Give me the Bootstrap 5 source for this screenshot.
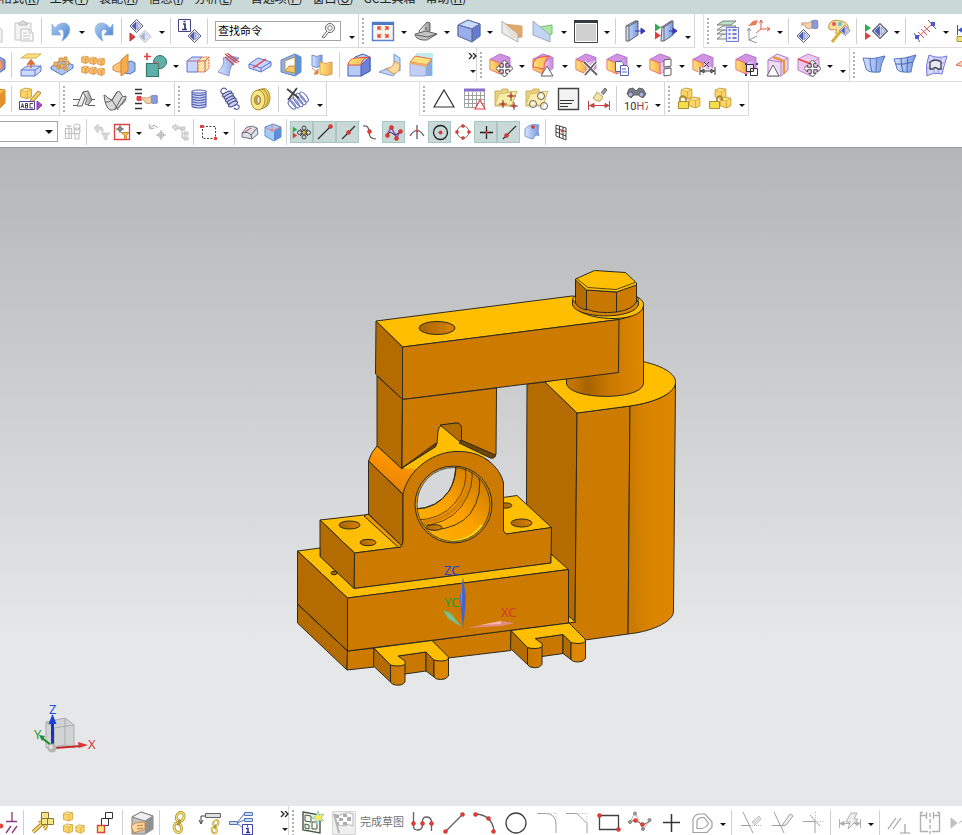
<!DOCTYPE html>
<html lang="zh-CN">
<head>
<meta charset="utf-8">
<meta name="viewport" content="width=device-width, initial-scale=1">
<title>装配</title>
<link href="https://cdn.jsdelivr.net/npm/bootstrap@5.3.0/dist/css/bootstrap.min.css" rel="stylesheet">
<style>
body{font:12px/16px "Noto Sans","Noto Sans CJK SC",sans-serif;color:#222}
.menus{height:14px;background:#c9d9d7;gap:10px;padding-bottom:8px;font-family:"Noto Sans CJK SC",sans-serif}
.menus a{color:#222;line-height:16px}
.bars{height:34px}
.bar{border-right:1px solid #d6d6d6;border-bottom:1px solid #dcdcdc}
.bar.lead-cut{margin-left:-22px}
.bar.page-cut{margin-left:-23px}
.bar.low-cut{margin-left:-10px}
.grip{width:8px;height:26px;flex:none}
.grip::before{content:"";display:block;height:26px;margin-left:3px;border-left:2px dotted #b0b0b0}
.tb,.car,.more,.sm{flex:none;border-radius:0;line-height:0}
.tb{width:31px;height:33px}
.sm{width:23px;height:22px}
.sm.on{background:#c9d9d7;border:1px solid #aac6c2 !important}
.sm.slim{width:20px}
.car{width:12px;height:20px}
.more{width:13px;height:33px;padding-top:10px !important}
.car::before,.more::before{content:"";display:inline-block;border:3px solid transparent;border-top-color:#111;border-bottom:0}
.chev{width:16px;height:33px;flex:none;border-radius:0;line-height:0}
.div{width:6px;height:26px;flex:none}
.div::before{content:"";display:block;height:26px;margin-left:2px;border-left:1px solid #d0d0d0}
.void{width:92px}
.ic{width:24px;height:24px;fill:none;stroke:#555;stroke-width:1;overflow:hidden;flex:none;opacity:.92}
.sm .ic{width:20px;height:20px}
.find{width:126px;height:20px;border:1px solid #a4a4a4;margin-left:4px}
.find input{font-size:11px;min-width:0;outline:0;text-indent:2px}
.combo{width:60px;height:21px;border:1px solid #a4a4a4;margin-left:-2px;margin-right:3px;appearance:none;background:#fff}
.combobox{display:grid}
.combobox>*{grid-area:1/1}
.combobox i{align-self:center;justify-self:end;border:4px solid transparent;border-top-color:#111;border-bottom:0;pointer-events:none}
.rowsel{height:32px;border-bottom:1px solid #9b9c9e}
.stage{background:linear-gradient(#b4b5b7,#e6e7e9 75%)}
.foot{height:29px}
.done{width:79px;height:33px;font-size:11px;color:#aaa;flex:none;border-radius:0}
.done span{white-space:nowrap}
.dis{opacity:.7}
.model{stroke:#2c2a22;stroke-width:1;stroke-linejoin:round}
.axis{font:13px "Noto Sans",sans-serif;stroke:none}
</style>
<script src="https://cdn.jsdelivr.net/npm/bootstrap@5.3.0/dist/js/bootstrap.bundle.min.js" defer></script>
</head>
<body class="vh-100 d-flex flex-column overflow-hidden bg-white">
<svg width="0" height="0" class="position-absolute" aria-hidden="true"><defs>
<linearGradient id="b"><stop stop-color="#d6e4ff"/><stop offset="1" stop-color="#6c8fe0"/></linearGradient>
<linearGradient id="u" x2="1" y2="1"><stop stop-color="#a9cbf2"/><stop offset="1" stop-color="#3173cc"/></linearGradient>
<linearGradient id="g"><stop stop-color="#fff0a0"/><stop offset="1" stop-color="#e5ab22"/></linearGradient>
<linearGradient id="o"><stop stop-color="#ffe46a"/><stop offset="1" stop-color="#f5a545"/></linearGradient>
<linearGradient id="p"><stop stop-color="#f3daf7"/><stop offset="1" stop-color="#bf7ad8"/></linearGradient>
<linearGradient id="y"><stop stop-color="#f7f7f7"/><stop offset="1" stop-color="#8d8d8d"/></linearGradient>
<symbol id="cube" viewBox="0 0 24 24"><path d="M1 7 12 1l11 4-11 6z" fill="#cf8be0" stroke="#a65cc6"/><path d="m12 11 11-6v12l-11 6z" fill="url(#p)" stroke="#b97fd0"/><path d="m1 7 11 4v12L1 18z" fill="url(#o)" stroke="#f0605a"/></symbol>
<symbol id="bcube" viewBox="0 0 24 24"><path d="M1 6 11 1l12 4-8 5z" fill="#c5d5ff"/><path d="m15 10 8-5v12l-8 6z" fill="#5671cc"/><path d="m1 6 14 4v13L1 17z" fill="#8fa9ee"/><path d="M1 6 11 1l12 4v12l-8 6L1 17zm0 0 14 4 8-5m-8 5v13" stroke="#5c77cc" stroke-width=".8"/></symbol>
<symbol id="box" viewBox="0 0 12 12"><path d="m1 3 4-2 6 1v7l-4 2-6-2z" fill="#fbd25a" stroke="#c3901f" stroke-width=".8"/><path d="m1 3 6 1 4-2M7 4v7" stroke="#d2a02c" stroke-width=".8"/><path d="m2 3 3-1 4 .5-2 1z" fill="#fff2b6" stroke="none"/></symbol>
<symbol id="boxo" viewBox="0 0 12 12"><path d="m1 3 4-2 6 1v8l-4 2-6-2z" fill="#fbb95a" stroke="#d07a20"/><path d="m1 3 6 1 4-2M7 4v8" stroke="#d07a20"/><path d="m2 3 3-1 4 .5-2 1z" fill="#ffeaa6" stroke="none"/></symbol>
<symbol id="dia" viewBox="0.5 0.5 15 15"><path d="m8 1 7 7-7 7-7-7z" fill="#f3f5fc" stroke="#445"/><path d="m7.500 3.500-4.500 4.500 4.500 4.500z" fill="#4354b0" stroke="#2e3e94" stroke-width=".6"/><path d="m9 4 4 4-4 4z" fill="#c9d0f2" stroke="#5765b5" stroke-width=".6"/></symbol>
<symbol id="move" viewBox="0 0 14 14"><path d="m7 0 3 3H8v3h3V4l3 3-3 3V8H8v3h2l-3 3-3-3h2V8H3v2L0 7l3-3v2h3V3H4z" fill="#fff" stroke="#333" stroke-width=".8"/></symbol>
<symbol id="tris" viewBox="0 0 8 16"><path d="m1 0 6 4-6 4z" fill="#21a63e" stroke="none"/><path d="m1 8 6 4-6 4z" fill="#d8332f" stroke="none"/></symbol>
<symbol id="dot" viewBox="0 0 6 6"><circle cx="3" cy="3" r="2.400" fill="#ed2b22" stroke="#a71c18" stroke-width=".6"/></symbol>
<symbol id="link" viewBox="0 0 12 20"><ellipse cx="7" cy="5" rx="3" ry="4" transform="rotate(25 7 5)" stroke="#a58a20" stroke-width="2.400"/><ellipse cx="7" cy="5" rx="3" ry="4" transform="rotate(25 7 5)" stroke="#f3dd68" stroke-width="1.200"/><ellipse cx="5" cy="14" rx="3" ry="4" transform="rotate(-15 5 14)" stroke="#a58a20" stroke-width="2.400"/><ellipse cx="5" cy="14" rx="3" ry="4" transform="rotate(-15 5 14)" stroke="#f3dd68" stroke-width="1.200"/><path d="m7 7-2 5" stroke="#a58a20" stroke-width="2"/></symbol>
<symbol id="fold" viewBox="0 0 24 24"><path d="M1 4h6l1-2h6v3h8l-4 14H1z" fill="#e6cf74" stroke="#c2a850"/><path d="m5 7 18-3-5 14H1z" fill="#fbeba2" stroke="#d2b85e"/></symbol>
<symbol id="hand" viewBox="0 0 14 10"><path d="M8.500 1.500q3-1 5 0v6q-2 1-5 0z" fill="#7f93dc" stroke="#5869ad" stroke-width=".6"/><path d="M0 3.500q3-1 5 0l3.500-1.500v5.500q-3 1-4.500 0L2.500 5H0z" fill="#f8cfa4" stroke="#a87c4e" stroke-width=".6"/></symbol>
</defs></svg>

<nav class="menus d-flex align-items-end overflow-hidden text-nowrap flex-shrink-0" aria-label="菜单">
<a class="text-decoration-none" href="#">格式(<u>R</u>)</a><a class="text-decoration-none" href="#">工具(<u>T</u>)</a><a class="text-decoration-none" href="#">装配(<u>A</u>)</a><a class="text-decoration-none" href="#">信息(<u>I</u>)</a><a class="text-decoration-none me-2" href="#">分析(<u>L</u>)</a><a class="text-decoration-none" href="#">首选项(<u>P</u>)</a><a class="text-decoration-none" href="#">窗口(<u>O</u>)</a><a class="text-decoration-none" href="#">GC工具箱</a><a class="text-decoration-none" href="#">帮助(<u>H</u>)</a>
</nav>

<div class="bars d-flex overflow-hidden flex-shrink-0" role="toolbar" aria-label="标准">
<div class="bar page-cut d-flex align-items-center flex-shrink-0">
<button class="btn p-0 border-0 tb" title="复制"><svg class="ic" viewBox="0 0 24 24"><path d="M6 6h9l6 5v12H6z" fill="#f5f5f5" stroke="#bbb"/></svg></button>
<button class="btn p-0 border-0 tb" title="粘贴"><svg class="ic" viewBox="0 0 24 24"><path d="M3 4h16v17H3z" fill="#f2f2f2" stroke="#c4c4c4"/><path d="M7 6V4h2l1-2h2l1 2h2v2z" fill="#ddd" stroke="#b5b5b5"/><path d="M9 10h8l4 4v8H9z" fill="#fafafa" stroke="#bbb"/><path d="M17 10v4h4M11 14h4m-4 3h7m-7 3h7" stroke="#c4c4c4"/></svg></button>
<span class="div"></span>
<button class="btn p-0 border-0 tb" title="撤销"><svg class="ic" viewBox="0 0 24 24"><path d="M3 5v11h9l-3-4c4-4 8 0 4 10C23 16 23 5 15 4c-4 0-7 2-9 5z" fill="url(#u)" stroke="#7da5dc" stroke-width=".7"/></svg></button><button class="btn p-0 border-0 car" title="更多"></button>
<button class="btn p-0 border-0 tb" title="重做"><svg class="ic" viewBox="0 0 24 24"><path d="M21 5v11h-9l3-4c-4-4-8 0-4 10C1 16 1 5 9 4c4 0 7 2 9 5z" fill="url(#u)" stroke="#7da5dc" stroke-width=".7"/></svg></button>
<span class="div"></span>
<button class="btn p-0 border-0 tb" title="重复命令"><svg class="ic" viewBox="0 0 24 24"><use href="#dia" x="0" y="0" width="15" height="14"/><g opacity=".5"><use href="#dia" x="9" y="11" width="14" height="13"/></g><path d="m1 14 5 4-5 4z" fill="#d0352e" stroke="#a22"/></svg></button><button class="btn p-0 border-0 car" title="更多"></button>
<span class="div"></span>
<button class="btn p-0 border-0 tb" title="命令信息"><svg class="ic" viewBox="0 0 24 24"><path d="M.5.5h12v12H.5z" fill="#fff" stroke="#35357e"/><path d="M5 5h2v5M4 10.500h5M5.500 2.500h2" stroke="#222268" stroke-width="1.700"/><use href="#dia" x="9" y="10" width="15" height="14"/></svg></button>
<span class="div"></span>
<div class="find d-flex align-items-center"><input class="border-0 p-0 flex-fill w-100 bg-transparent" id="q" type="text" value="查找命令" aria-label="查找命令"><svg class="ic" viewBox="0 0 24 24"><circle cx="14" cy="9" r="4.500"/><circle cx="14" cy="9" r="2.300" stroke-width=".8"/><path d="m11 12-5 6 2 1 5-6" fill="#fff"/></svg></div>
<button class="btn p-0 border-0 more ms-1" title="选项"></button>
</div>
<div class="bar d-flex align-items-center flex-shrink-0">
<span class="grip"></span>
<button class="btn p-0 border-0 tb" title="适合窗口"><svg class="ic" viewBox="0 0 24 24"><path d="M1.500 3.500h21v18h-21z" fill="#fff5ee" stroke="#4b7ac9" stroke-width="1.400"/><path d="M1 4.500h22" stroke="#3c6fc5" stroke-width="3"/><path d="M7 11V8h3M7 8l3 3m7 0V8h-3m3 0-3 3m-7 4v3h3m-3 0 3-3m7 0v3h-3m3 0-3-3" stroke="#e8432e" stroke-width="1.500"/></svg></button><button class="btn p-0 border-0 car" title="更多"></button>
<button class="btn p-0 border-0 tb" title="定向视图"><svg class="ic" viewBox="0 0 24 24"><path d="m5 12 8-9 3 1v8l-9 4z" fill="url(#y)"/><path d="m1 15 11-3 11 3-10 6H9q-8-1-8-6z" fill="#c0c0c0"/><path d="m2 16 12 2 9-3M12 8v3" stroke-width="1.200"/></svg></button><button class="btn p-0 border-0 car" title="更多"></button>
<button class="btn p-0 border-0 tb" title="着色"><svg class="ic" viewBox="0 0 24 24"><use href="#bcube" width="24" height="24"/></svg></button><button class="btn p-0 border-0 car" title="更多"></button>
<button class="btn p-0 border-0 tb" title="剖切"><svg class="ic" viewBox="0 0 24 24"><path d="m4 5 18 2v11l-10 1z" fill="#e0a15a" stroke="#d8a065"/><path d="m2 2 16 13v8L2 14z" fill="#e8e8e8" fill-opacity=".85" stroke="#aaa"/></svg></button>
<button class="btn p-0 border-0 tb" title="编辑截面"><svg class="ic" viewBox="0 0 24 24"><path d="m9 8 12-2v9l-8 2z" fill="#a6e6a0" stroke="#69b967"/><path d="M2 2 19 16v7L2 16z" fill="#bcd2f1" stroke="#95a4bc"/></svg></button><button class="btn p-0 border-0 car" title="更多"></button>
<button class="btn p-0 border-0 tb" title="背景"><svg class="ic" viewBox="0 0 24 24"><path d="M.5 1.500h23v22H.5z" fill="#cdcdcd" stroke="#333"/><path d="M0 2.500h24" stroke="#222a33" stroke-width="3"/><path d="M1.500 4.500h21v18h-21z" stroke="#fff"/></svg></button><button class="btn p-0 border-0 car" title="更多"></button>
<span class="div"></span>
<button class="btn p-0 border-0 tb" title="显示"><svg class="ic" viewBox="0 0 24 24"><path d="m3 7 9-5h3v14l-9 6H3z" fill="url(#b)"/><path d="M3 7h3v15M6 7l9-5"/><path d="M12 12h9m-3-3 4 3-4 3z" fill="#2525bd" stroke="#2525bd"/></svg></button>
<button class="btn p-0 border-0 tb" title="显示和隐藏"><svg class="ic" viewBox="0 0 24 24"><use href="#tris" x="0" y="4" width="8" height="17"/><path d="m8 8 9-6h2v14l-9 6H7z" fill="url(#b)"/><path d="M7 8h3v14m0-14 9-6"/><path d="M15 12h7m-3-3 4 3-4 3z" fill="#2525bd" stroke="#2525bd"/></svg></button>
<button class="btn p-0 border-0 more" title="选项"></button>
</div>
<div class="bar d-flex align-items-center flex-fill ms-2 border-start">
<span class="grip"></span>
<button class="btn p-0 border-0 tb" title="图层设置"><svg class="ic" viewBox="0 0 24 24"><g fill="#edf0ec" stroke="#707970"><path d="m1 20 6-5h13l-5 5z"/><path d="m1 15 6-4h13l-5 4z"/><path d="m1 11 6-4h13l-5 4z"/><path d="m1 6 6-4h13l-5 4z" fill="#b5dfc5"/></g><path d="M10.500 8.500h12v14h-12z" fill="#eef" stroke="#6670d7"/><path d="M12.500 11h2m2 0h4m-8 4h2m2 0h4m-8 4h2m2 0h4" stroke="#444f99" stroke-width="1.400"/></svg></button>
<button class="btn p-0 border-0 tb" title="坐标系"><svg class="ic" viewBox="0 0 24 24"><path d="M2 9v12l8-4m-8 4 8 3M0 12l2-3 2 3" stroke="#888"/><path d="M14 1v9l-5 4m5-4h8M12.500 4 14 1l1.500 3M20 8l3 2-3 2" stroke="#e94b36"/><path d="m1 7 5-5 5-1-2 5z" fill="#ee7048" stroke="none"/></svg></button><button class="btn p-0 border-0 car" title="更多"></button>
<span class="div"></span>
<button class="btn p-0 border-0 tb" title="选择对象"><svg class="ic" viewBox="0 0 24 24"><use href="#hand" x="5" y="0" width="18" height="12"/><use href="#dia" x="0" y="10" width="15" height="14"/></svg></button>
<button class="btn p-0 border-0 tb" title="编辑对象显示"><svg class="ic" viewBox="0 0 24 24"><path d="M2 10C0 2 8 0 14 2c7 1 9 7 6 12-3-3-7-1-8 2-4 0-4-3-2-5-3-1-5 1-8-1z" fill="#f7db91" stroke="#b98d42"/><circle cx="7" cy="5" r="2" fill="#e44" stroke="none"/><circle cx="13" cy="5" r="2" fill="#39c7d6" stroke="none"/><path d="m5 23 9-11" stroke="#d6aa31" stroke-width="3"/><use href="#dia" x="12" y="6" width="12" height="11"/></svg></button>
<span class="div"></span>
<button class="btn p-0 border-0 tb" title="播放"><svg class="ic" viewBox="0 0 24 24"><use href="#tris" x="0" y="5" width="8" height="16"/><use href="#dia" x="8" y="4" width="16" height="16"/></svg></button><button class="btn p-0 border-0 car" title="更多"></button>
<span class="div"></span>
<button class="btn p-0 border-0 tb" title="测量"><svg class="ic" viewBox="0 0 24 24"><path d="m5 18 14-13m-14 8 6 6m-3-9 6 6m-3-9 6 6" stroke="#d04b4b"/><path d="m1 14 6 9M15 1l8 9"/><path d="M2 16h4v4H2zM18 3h4v4h-4z" fill="#3b4bcb" stroke="none"/></svg></button><button class="btn p-0 border-0 car" title="更多"></button>
<button class="btn p-0 border-0 tb" title="测量距离"><svg class="ic" viewBox="0 0 24 24"><path d="M1.500 6v10M2 11h20M3 11l4-3v6z" fill="#2b3ccb" stroke="#2b3ccb"/><path d="M1 17.500h22v5H1z" fill="#f2df71" stroke="#a18d2f"/></svg></button>
</div>
</div>

<div class="bars d-flex overflow-hidden flex-shrink-0" role="toolbar" aria-label="特征">
<div class="bar lead-cut d-flex align-items-center flex-shrink-0">
<button class="btn p-0 border-0 tb" title="孔"><svg class="ic" viewBox="0 0 24 24"><path d="m4 4 10-2 9 5v9l-9 6-9-5z" fill="url(#b)" stroke="#4560b8"/><ellipse cx="17" cy="12" rx="4" ry="5" fill="#eb9860" stroke="#c66"/></svg></button>
<span class="div"></span>
<button class="btn p-0 border-0 tb" title="拉伸"><svg class="ic" viewBox="0 0 24 24"><path d="M2 5 8 1h14l-5 4z" fill="#ffe27c" stroke="#d2a83b"/><path d="m2 17 6-4h14v5l-6 5H2z" fill="#c9d6fa" stroke="#516ad0"/><path d="M2 17h14l6-4m-6 4v6" stroke="#516ad0"/><path d="M12 15V9m-3 2 3-4 3 4z" fill="#e88132" stroke="#d76320" stroke-width="1.600"/></svg></button>
<button class="btn p-0 border-0 tb" title="阵列几何"><svg class="ic" viewBox="0 0 24 24"><path d="m1 14 10-7 12 5v3l-11 7L1 16z" fill="#aac1ef" stroke="#416cb9"/><g fill="#f2b24c" stroke="#b97328" stroke-width=".7"><path d="M4 9h4v4H4zM9 5h4v4H9zM10 11h4v4h-4zM15 8h4v4h-4zM14 14h3v3h-3zM14 4h3v3h-3zM7 13h3v3H7z"/></g></svg></button>
<button class="btn p-0 border-0 tb" title="阵列特征"><svg class="ic" viewBox="0 0 24 24"><use href="#boxo" x="0" y="2" width="8" height="9"/><use href="#boxo" x="8" y="3" width="8" height="9"/><use href="#boxo" x="16" y="4" width="8" height="9"/><use href="#boxo" x="0" y="12" width="8" height="9"/><use href="#boxo" x="8" y="13" width="8" height="9"/><use href="#boxo" x="16" y="14" width="8" height="9"/></svg></button>
<button class="btn p-0 border-0 tb" title="镜像"><svg class="ic" viewBox="0 0 24 24"><path d="m1 13 7-4 5 2v8H6l-5-2z" fill="#ffc16b" stroke="#d9853d"/><path d="m13 10 6-2 4 2v8l-5 3-5-1z" fill="#93b5ef" stroke="#3b67b6"/><path d="m9 7 7-6v17l-7 5z" fill="#f8a63e" stroke="#cd7a21"/></svg></button>
<button class="btn p-0 border-0 tb" title="合并"><svg class="ic" viewBox="0 0 24 24"><circle cx="17" cy="9" r="6.500" fill="#51aba1" stroke="#276b64"/><path d="M3.500 10.500h12v13h-12z" fill="#51aba1" stroke="#276b64" stroke-width="1.200"/><path d="M4 0v7M1 3.500h7" stroke="#df3030" stroke-width="1.600"/><path d="M11 10v-1h4v6" stroke="#b96666"/></svg></button><button class="btn p-0 border-0 car" title="更多"></button>
<button class="btn p-0 border-0 tb" title="偏置"><svg class="ic" viewBox="0 0 24 24"><path d="m1 8 5-4h10l-4 4v11H1z" fill="#c6d3fa" stroke="#526bd5"/><path d="m12 8 4-4h7v11l-4 4h-7z" fill="#fde59b" stroke="#d44" stroke-dasharray="2 1"/><path d="M1 8h18l4-4m-4 4v11" stroke="#bc5670"/></svg></button>
<button class="btn p-0 border-0 tb" title="修剪片体"><svg class="ic" viewBox="0 0 24 24"><path d="M6 5q3 6-5 14l11 4q0-11 10-18l-8-2z" fill="url(#b)" stroke="#7c90ce"/><path d="m8 1 12 9M10 0l12 9M8 4l9 8" stroke="#dc3333" stroke-width="1.100"/></svg></button>
<button class="btn p-0 border-0 tb" title="修剪体"><svg class="ic" viewBox="0 0 24 24"><path d="m1 11 9-6 13 4v4l-10 6L1 15z" fill="#c4d1fa" stroke="#5069d3"/><path d="m1 11 12 4 10-6M13 15v4" stroke="#5069d3"/><path d="m5 15 13-9" stroke="#e33" stroke-width="1.500"/></svg></button>
<button class="btn p-0 border-0 tb" title="抽壳"><svg class="ic" viewBox="0 0 24 24"><path d="m2 7 14-6 6 3v15l-6 4-14-4z" fill="#89a9df" stroke="#587bbd"/><path d="m6 8 10-4v12L6 18z" fill="#fff" stroke="#b98c36"/><path d="m6 18 4-5h6v7z" fill="#f4c35b" stroke="#b98c36"/><path d="m16 1 6 3v15l-6 4z" fill="#5689cf" stroke="none"/></svg></button>
<button class="btn p-0 border-0 tb" title="加厚"><svg class="ic" viewBox="0 0 24 24"><path d="M2 2q4 3 10 0v11q-6 3-10 0z" fill="url(#b)" stroke="#6484c7"/><path d="M10 9q6 3 12 0v12q-6 3-12 0z" fill="url(#o)" stroke="#d1964a"/><path d="m2 15 6 5m0-4v5H4z" fill="#e17c35" stroke="#e17c35"/></svg></button>
<span class="div"></span>
<button class="btn p-0 border-0 tb" title="边倒圆"><svg class="ic" viewBox="0 0 24 24"><path d="m1 12 7-8 8-3 7 3v14l-9 5H1z" fill="#b4c8f6" stroke="#3350b4"/><path d="M14 12v11l9-5V4z" fill="#6078d1" stroke="#3350b4"/><path d="M1 12Q2 6 8 5l14-1q-7 1-8 8z" fill="url(#o)" stroke="#d94a35"/></svg></button>
<button class="btn p-0 border-0 tb" title="面倒圆"><svg class="ic" viewBox="0 0 24 24"><path d="m1 19 9-4 10 3-5 5zM16 1l6 4v13l-6-4z" fill="#b7d2f6" stroke="#6d94d0"/><path d="M17 8q-2 7-9 8l8 5q6-2 6-9z" fill="#ffd895" stroke="#d9884a"/></svg></button>
<button class="btn p-0 border-0 tb" title="倒斜角"><svg class="ic" viewBox="0 0 24 24"><path d="M7 0h17v23H7z" fill="#bdeaf0" stroke="none"/><path d="M1 10h16v13H1z" fill="#bdccf1" stroke="#8fa4da"/><path d="m17 10 6-4v17h-6z" fill="#82a5de" stroke="none"/><path d="m1 9 5-6 17 3-5 6z" fill="#f6df72" stroke="#e0624b"/><path d="m1 9 17 2v3L1 11z" fill="#efa461" stroke="none"/></svg></button>
<button class="btn p-0 border-0 chev ms-4" title="展开"><svg class="ic" viewBox="0 0 24 24"><path d="m9 0 3 3-3 3m4-6 3 3-3 3" stroke="#111" stroke-width="1.300"/><path d="M10 17h6l-3 3z" fill="#111" stroke="none"/></svg></button>
</div>
<div class="bar d-flex align-items-center flex-shrink-0">
<span class="grip"></span>
<button class="btn p-0 border-0 tb" title="移动面"><svg class="ic" viewBox="0 0 24 24"><use href="#cube" width="22" height="22"/><use href="#move" x="7" y="7" width="17" height="17"/></svg></button><button class="btn p-0 border-0 car" title="更多"></button>
<button class="btn p-0 border-0 tb" title="拉出面"><svg class="ic" viewBox="0 0 24 24"><use href="#cube" width="22" height="22"/><path d="M1 14Q1 4 10 4l8-1q-6 3-6 13z" fill="url(#o)" stroke="#e44"/><path d="m15 13 6 10H9z" fill="#fff"/></svg></button><button class="btn p-0 border-0 car" title="更多"></button>
<button class="btn p-0 border-0 tb" title="删除面"><svg class="ic" viewBox="0 0 24 24"><use href="#cube" width="22" height="22"/><path d="m9 9 13 13M21 9 10 22" stroke="#fff" stroke-width="3.500"/><path d="m9 9 13 13M21 9 10 22" stroke-width="1.800"/></svg></button>
<button class="btn p-0 border-0 tb" title="复制面"><svg class="ic" viewBox="0 0 24 24"><use href="#cube" width="22" height="22"/><path d="M9.500 8.500h6l2 2v8h-8z" fill="#fff" stroke="#45a"/><path d="M14.500 12.500h6l2 2v8h-8zM16 16h4m-4 3h5" fill="#fff" stroke="#45a"/></svg></button><button class="btn p-0 border-0 car" title="更多"></button>
<button class="btn p-0 border-0 tb" title="阵列面"><svg class="ic" viewBox="0 0 24 24"><use href="#cube" width="22" height="22"/><path d="m15 7 7-1v7l-7 1zM15 16l7-1v7l-7 1z" fill="#fff"/></svg></button><button class="btn p-0 border-0 car" title="更多"></button>
<button class="btn p-0 border-0 tb" title="线性尺寸"><svg class="ic" viewBox="0 0 24 24"><use href="#cube" width="22" height="22"/><path d="M8 18h15M8 14v8M23 14v8M9 18l3-2v4zM22 18l-3-2v4z" stroke="#fff" stroke-width="3"/><path d="M8 18h15M8 14v8M23 14v8M9 18l3-2v4zM22 18l-3-2v4zM12 9l5 5m0-5-5 5" stroke="#222"/></svg></button><button class="btn p-0 border-0 car" title="更多"></button>
<button class="btn p-0 border-0 tb" title="组合面"><svg class="ic" viewBox="0 0 24 24"><use href="#cube" width="22" height="22"/><path d="M11.500 11.500h7v7h-7zM15.500 15.500h7v7h-7z" fill="#fff" fill-opacity=".6" stroke="#222"/><path d="M10 10h2v2h-2zM21 10h2v2h-2zM10 21h2v2h-2z" fill="#22a" stroke="none"/></svg></button>
<button class="btn p-0 border-0 tb" title="调整面"><svg class="ic" viewBox="0 0 24 24"><path d="m2 7 9-6 11 4v12l-7 6H2z" fill="#eed9f3" stroke="#aa6fc0"/><path d="m2 7 13 2 7-4m-7 4v14" stroke="#aa6fc0"/><path d="m7 4 11 4v13" stroke="#e98b32" stroke-width="2.400"/><path d="m7 12 6 11H1z" fill="#fff"/></svg></button>
<button class="btn p-0 border-0 tb" title="移动边"><svg class="ic" viewBox="0 0 24 24"><path d="m1 6 10-5 11 4v12l-8 6-13-6z" fill="#edc4ee" stroke="#af79c2"/><path d="m1 6 13 5 8-6" stroke="#af79c2"/><path d="m1 6 13 5" stroke="#e33" stroke-width="1.500"/><use href="#move" x="7" y="7" width="17" height="17"/></svg></button><button class="btn p-0 border-0 car" title="更多"></button>
<button class="btn p-0 border-0 more" title="选项"></button>
</div>
<div class="bar d-flex align-items-center flex-fill">
<span class="grip"></span>
<button class="btn p-0 border-0 tb" title="直纹"><svg class="ic" viewBox="0 0 24 24"><path d="M1 5q10 2 22-2-4 7-5 16-12 1-14-3Q3 11 1 5z" fill="url(#b)" stroke="#4769be"/><path d="M8 5q0 7 2 14M15 5q-1 7-1 14" stroke="#4769be"/></svg></button>
<button class="btn p-0 border-0 tb" title="曲线网格"><svg class="ic" viewBox="0 0 24 24"><path d="M1 6q10 0 22-4-4 7-5 17-12 1-14-3Q3 11 1 6z" fill="url(#b)" stroke="#4769be"/><path d="M8 5q0 7 2 14M15 4q-1 7-1 15M2 11q9 1 18-2" stroke="#3758b0"/></svg></button>
<button class="btn p-0 border-0 tb" title="N边曲面"><svg class="ic" viewBox="0 0 24 24"><path d="M5 2q9 4 18 1-3 10-5 18-9-2-15 2Q1 12 5 2z" fill="#d3d6ff" stroke="#6a68d4"/><path d="M3 9q9 2 17 1M3 15q8-1 16 1M10 4v17M17 4l-3 16" stroke="#9b99ee"/><path d="M6 16V9q6-4 11 0v7h-3q-3-3-5 0z" fill="#e6e6f8" stroke="#333" stroke-width="1.300"/></svg></button>
<button class="btn p-0 border-0 tb" title="扫掠"><svg class="ic" viewBox="0 0 24 24"><path d="m1 12 8-5h12v9z" fill="#f9d3c3" stroke="#d66242"/></svg></button>
</div>
</div>

<div class="bars d-flex overflow-hidden flex-shrink-0" role="toolbar" aria-label="装配">
<div class="bar lead-cut d-flex align-items-center flex-shrink-0">
<button class="btn p-0 border-0 tb" title="块"><svg class="ic" viewBox="0 0 24 24"><path d="m8 5 9-3 6 1v13l-6 6H8z" fill="#fbb13a" stroke="#c97c1b"/><path d="m18 7 5-4v13l-5 5z" fill="#e08a1a" stroke="none"/></svg></button>
<span class="div"></span>
<button class="btn p-0 border-0 tb" title="名称"><svg class="ic" viewBox="0 0 24 24"><use href="#box" x="0" y="0" width="14" height="13"/><path d="m12 12 7-8 3 2-7 8-4 1z" fill="#f2cd55" stroke="#a87928"/><path d="M.5 14.500h15v8H.5z" fill="#fff" stroke="#44348e"/><path d="m2 21 1.500-4.500L5 21m-2.500-1.500h2M6.500 16.500h2v4.500h-2zm0 2h2M14 16.500h-3V21h3" stroke="#222" stroke-width=".9"/><path d="m18 14 5 4-5 5z" fill="#a43dbe" stroke="#7f2d9c"/></svg></button>
<button class="btn p-0 border-0 more" title="选项"></button>
</div>
<div class="bar d-flex align-items-center flex-shrink-0">
<span class="grip"></span>
<button class="btn p-0 border-0 tb" title="齿轮齿条"><svg class="ic" viewBox="0 0 24 24"><path d="M1 12.500h7M16 12.500h7M1 18.500h5M16 18.500h7"/><path d="m5 19 6-14h4l-5 14z" fill="#eee"/><path d="m11 5 5-1 4 9-4 5-3-1 2-5z" fill="url(#y)"/></svg></button>
<button class="btn p-0 border-0 tb" title="锥齿轮"><svg class="ic" viewBox="0 0 24 24"><path d="M1 8q3 1 4 3l4 2 5-8q2-1 3 0l3 5 3-1q0 6-5 9-6 6-11 5-5-3-6-15z" fill="#d5d5d5"/><path d="m9 13 5 8m0-16-5 8q-3 3-7 2m10 7 7-12m-5 13 8-11" /></svg></button>
<button class="btn p-0 border-0 tb" title="选择列表"><svg class="ic" viewBox="0 0 24 24"><path d="M1 2.500h7m-7 4h7m-7 10h7m-7 5h7" stroke="#222" stroke-width="1.600"/><path d="M3 9.500h4v4H3z" fill="#d33" stroke="#d33"/><use href="#hand" x="7" y="7" width="17" height="12"/></svg></button>
<button class="btn p-0 border-0 more" title="选项"></button>
</div>
<div class="bar d-flex align-items-center flex-shrink-0">
<span class="grip"></span>
<button class="btn p-0 border-0 tb" title="圆柱压缩弹簧"><svg class="ic" viewBox="0 0 24 24"><g stroke="#4a55a8" stroke-width="1.100"><path d="M5 4h14v17H5z" fill="#ccd5ff" stroke="none"/><ellipse cx="12" cy="4.500" rx="7" ry="1.500" fill="#eef"/><path d="M5 7q7 3 14 0M5 9.500q7 3 14 0M5 12q7 3 14 0M5 14.500q7 3 14 0M5 17q7 3 14 0M5 19.500q7 3 14 0M5 4.500v15m14-15v15"/></g></svg></button>
<button class="btn p-0 border-0 tb" title="圆柱拉伸弹簧"><svg class="ic" viewBox="0 0 24 24"><g stroke="#3c4384" stroke-width="1.100" fill="#c7cff4"><path d="M7 7Q2 7 3 3q3-4 6 0M17 18q5-1 4 3-2 3-5 0" fill="none"/><ellipse cx="9" cy="7" rx="5" ry="2" transform="rotate(-28 9 7)"/><ellipse cx="10.500" cy="9.500" rx="5" ry="2" transform="rotate(-28 10 9)"/><ellipse cx="12" cy="12" rx="5" ry="2" transform="rotate(-28 12 12)"/><ellipse cx="13.500" cy="14.500" rx="5" ry="2" transform="rotate(-28 13 14)"/><ellipse cx="15" cy="17" rx="5" ry="2" transform="rotate(-28 15 17)"/></g></svg></button>
<button class="btn p-0 border-0 tb" title="碟簧"><svg class="ic" viewBox="0 0 24 24"><g fill="#f0cf4b" stroke="#a08528"><ellipse cx="15" cy="11" rx="6" ry="9.500"/><ellipse cx="12" cy="12" rx="7" ry="10"/><ellipse cx="9" cy="13" rx="7" ry="10" fill="#f7e27a"/><ellipse cx="8.500" cy="13" rx="3" ry="4.500" fill="#bc9a47"/><ellipse cx="9.500" cy="13" rx="1.500" ry="3" fill="#fff"/></g></svg></button>
<span class="div"></span>
<button class="btn p-0 border-0 tb" title="删除弹簧"><svg class="ic" viewBox="0 0 24 24"><g stroke="#6470bb" stroke-width="1.200"><ellipse cx="6" cy="18" rx="2.500" ry="5" transform="rotate(-40 6 18)"/><ellipse cx="9" cy="16" rx="2.500" ry="6" transform="rotate(-40 9 16)"/><ellipse cx="12" cy="14" rx="2.500" ry="7" transform="rotate(-40 12 14)"/><ellipse cx="15" cy="12" rx="2.500" ry="7" transform="rotate(-40 15 12)"/><ellipse cx="18" cy="10" rx="2.500" ry="6" transform="rotate(-40 18 10)"/></g><path d="m1 2 12 9M11 1 2 13" stroke="#333" stroke-width="1.800"/></svg></button>
<button class="btn p-0 border-0 more" title="选项"></button>
</div>
<div class="void flex-shrink-0"></div>
<div class="bar border-start d-flex align-items-center flex-shrink-0">
<span class="grip"></span>
<button class="btn p-0 border-0 tb" title="三角形"><svg class="ic" viewBox="0 0 24 24"><path d="m12 3 10 17H2z" stroke="#222" stroke-width="1.200"/></svg></button>
<button class="btn p-0 border-0 tb" title="表格"><svg class="ic" viewBox="0 0 24 24"><path d="M1.500 2.500h20v18h-20zM1 8.500h20M1 12.500h20M1 16.500h20M5.500 5v15M9.500 5v15M13.500 5v15M17.500 5v15" stroke="#999"/><path d="M1 3h21" stroke="#7d63c7" stroke-width="3"/><path d="m17 13 5 9H12z" fill="#fff" stroke="#d33" stroke-width="1.200"/></svg></button>
<button class="btn p-0 border-0 tb" title="点集"><svg class="ic" viewBox="0 0 24 24"><use href="#fold" width="24" height="24"/><path d="M17 5v9m-4-5h9M9 13v8m-4-4h8m7-2v8m-4-4h8" stroke="#444"/><use href="#dot" x="15" y="7" width="4" height="4"/><use href="#dot" x="7" y="15" width="4" height="4"/><use href="#dot" x="18" y="17" width="4" height="4"/></svg></button>
<button class="btn p-0 border-0 tb" title="圆集"><svg class="ic" viewBox="0 0 24 24"><use href="#fold" width="24" height="24"/><g fill="#fff8" stroke="#555"><circle cx="16" cy="9" r="3.500"/><circle cx="8" cy="17" r="3.500"/><circle cx="19" cy="19" r="3.500"/></g></svg></button>
<button class="btn p-0 border-0 tb" title="技术要求"><svg class="ic" viewBox="0 0 24 24"><path d="M2.500 1.500h20v21h-20z" fill="#f2f2f2" stroke="#333" stroke-width="1.400"/><path d="M4 13.500h14m-14 3h12m-12 3h8" stroke="#222"/></svg></button>
<button class="btn p-0 border-0 tb" title="清理尺寸"><svg class="ic" viewBox="0 0 24 24"><path d="m14 6 4-5 2 2-4 5" fill="#999"/><path d="m10 5 6 5-3 4q-4 1-7-3 2-2 4-6z" fill="#f3e29c" stroke="#b79b4b"/><path d="M2 18.500h20M1.500 14v9m21-9v9M3 18.500l4-2v4zm19 0-4-2v4z" fill="#b33" stroke="#b33"/></svg></button>
<span class="div"></span>
<button class="btn p-0 border-0 tb" title="公差查询"><svg class="ic" viewBox="0 0 24 24"><path d="m5 2 4-1 3 3 3-3 4 1 3 5-3 4-4-3h-5l-3 3-4-4z" fill="#6c7180"/><circle cx="6.500" cy="7.500" r="2.500" fill="#9ca9df"/><circle cx="17.500" cy="7.500" r="2.500" fill="#9ca9df"/><text x="0" y="23" font-family="Roboto, sans-serif" font-size="11" fill="#222" stroke="none">10<tspan fill="#a22b35">H7</tspan></text></svg></button>
<button class="btn p-0 border-0 more" title="选项"></button>
</div>
<div class="bar d-flex align-items-center flex-shrink-0">
<span class="grip"></span>
<button class="btn p-0 border-0 tb" title="锁定组件"><svg class="ic" viewBox="0 0 24 24"><use href="#box" x="3" y="0" width="13" height="13"/><use href="#box" x="11" y="9" width="13" height="13"/><path d="M3 14v-3q3-4 6 0v3" stroke="#997719" stroke-width="1.600"/><path d="M1.500 14.500h10v7h-10z" fill="#f5d83f" stroke="#a5861c"/></svg></button>
<button class="btn p-0 border-0 tb" title="解锁组件"><svg class="ic" viewBox="0 0 24 24"><use href="#box" x="6" y="0" width="13" height="13"/><use href="#box" x="11" y="9" width="13" height="13"/><path d="M9 14v-3q3-4 5 0v3" stroke="#997719" stroke-width="1.600"/><path d="M1.500 14.500h10v7h-10z" fill="#f5d83f" stroke="#a5861c"/></svg></button>
<button class="btn p-0 border-0 more" title="选项"></button>
</div>
</div>

<div class="rowsel d-flex align-items-center overflow-hidden flex-shrink-0" role="toolbar" aria-label="选择">
<div class="combobox flex-shrink-0"><select class="combo" aria-label="选择范围"><option></option></select><i class="me-2"></i></div>
<button class="btn p-0 border-0 sm" title="装配选择"><svg class="ic dis" viewBox="0 0 20 20"><g stroke="#aaa" stroke-width="1.200"><path d="M2.500 6.500h6v10h-6zM2 11.500h14M6 3v14M3 4h6M12 11v6h4v-5"/><circle cx="14" cy="5" r="3"/><circle cx="14" cy="9" r="3"/></g></svg></button>
<span class="div"></span>
<button class="btn p-0 border-0 sm" title="重置"><svg class="ic dis" viewBox="0 0 20 20"><path d="m2 6 4-4v3q6-1 5 5-1-3-5-2v3zM9 11h9l-3 3v4l-3-1v-3z" fill="#c5c5c5" stroke="#bbb"/></svg></button>
<button class="btn p-0 border-0 sm slim" title="过滤器"><svg class="ic" viewBox="0 0 20 20"><path d="M1.500 2.500h15v15h-15z" fill="#fff" stroke="#d33" stroke-width="1.300"/><circle cx="7" cy="7" r="2"/><path d="M7 3v8M3 7h8"/><path d="M8 10.500h8l-2.500 3v3h-2v-3z" fill="#f1b43a" stroke="#c98325"/></svg></button><button class="btn p-0 border-0 car" title="更多"></button>
<button class="btn p-0 border-0 sm" title="上一选择"><svg class="ic dis" viewBox="0 0 20 20"><g stroke="#888"><path d="m2 2 1 5 4-1M3 6q4-5 8 0M14 8v10m-5-5h10"/><circle cx="14" cy="13" r="2.500"/></g></svg></button>
<button class="btn p-0 border-0 sm" title="选择树"><svg class="ic dis" viewBox="0 0 20 20"><path d="m2 5 4-3v2q4 0 6 4-3-2-6-1v2zM11 5h4v3h-4zM14 10h4v3h-4zM14 15h4v3h-4zM12 8v8h2" fill="#ccc" stroke="#aaa"/></svg></button>
<span class="div"></span>
<button class="btn p-0 border-0 sm" title="矩形选择"><svg class="ic" viewBox="0 0 20 20"><path d="M3.500 4.500h13v12h-13z" stroke="#333" stroke-dasharray="2 1.500"/><path d="M1 3h4v3H1zM15 15h3v3h-3z" fill="#d33" stroke="none"/></svg></button><button class="btn p-0 border-0 car" title="更多"></button>
<span class="div"></span>
<button class="btn p-0 border-0 sm" title="边"><svg class="ic" viewBox="0 0 20 20"><path d="m2 11 5-6q6-2 10 1l1 6-6 5-10-2z" fill="#dadde6" stroke="#667"/><path d="M2 11q6-2 9 2l1 4m-1-4 6-7"/><path d="m5 10 6-4" stroke="#d33"/></svg></button>
<button class="btn p-0 border-0 sm" title="实体"><svg class="ic" viewBox="0 0 20 20"><path d="m2 5 8-3 8 3v10l-7 4-9-5z" fill="#9ec8f6" stroke="#5584c9"/><path d="m11 9 7-4v10l-7 4z" fill="#5285d5" stroke="none"/><path d="M9 2v7L2 5m7 4 9-4" stroke="#e66"/></svg></button>
<span class="div"></span>
<button class="btn p-0 sm on" title="捕捉点"><svg class="ic" viewBox="0 0 20 20"><use href="#tris" x="0" y="4" width="6" height="13"/><g stroke="#333"><circle cx="12" cy="6" r="2"/><circle cx="12" cy="15" r="2"/><circle cx="7.500" cy="10.500" r="2"/><circle cx="16.500" cy="10.500" r="2"/><circle cx="12" cy="10.500" r="2" fill="#fc2"/><path d="m8 7 2 2m4 3 2 2m0-7-2 2m-4 3-2 2"/></g></svg></button>
<button class="btn p-0 sm on" title="端点"><svg class="ic" viewBox="0 0 20 20"><path d="m3 17 12-12" stroke="#222" stroke-width="1.200"/><use href="#dot" x="13" y="2" width="5" height="5"/></svg></button>
<button class="btn p-0 sm on" title="中点"><svg class="ic" viewBox="0 0 20 20"><path d="m4 17 13-13" stroke="#222" stroke-width="1.200"/><use href="#dot" x="8" y="8" width="5" height="5"/></svg></button>
<button class="btn p-0 border-0 sm" title="控制点"><svg class="ic" viewBox="0 0 20 20"><path d="M2 4q6-1 6 6t7 7" stroke-width="1.200"/><use href="#dot" x="6" y="7" width="5" height="5"/></svg></button>
<button class="btn p-0 sm on" title="极点"><svg class="ic" viewBox="0 0 20 20"><path d="m3 13 4-8 6 11 3-8" stroke="#94c" stroke-width="1.600"/><path d="m3 13 3-3 5 3 6-3" stroke="#222"/><use href="#dot" x="1" y="11" width="5" height="5"/><use href="#dot" x="5" y="3" width="5" height="5"/><use href="#dot" x="10" y="14" width="5" height="5"/><use href="#dot" x="14" y="7" width="5" height="5"/></svg></button>
<button class="btn p-0 border-0 sm" title="交点"><svg class="ic" viewBox="0 0 20 20"><path d="M3 14q7-11 14 0M10 3v14" stroke="#444" stroke-width="1.200"/><circle cx="10" cy="9" r="1" fill="#d33" stroke="#d33"/></svg></button>
<button class="btn p-0 sm on" title="圆心"><svg class="ic" viewBox="0 0 20 20"><circle cx="10.500" cy="10.500" r="7" stroke="#111" stroke-width="1.300"/><circle cx="10.500" cy="10.500" r="1.500" fill="#d22" stroke="#d22"/></svg></button>
<button class="btn p-0 border-0 sm" title="象限点"><svg class="ic" viewBox="0 0 20 20"><circle cx="10" cy="10" r="6" stroke="#666"/><use href="#dot" x="8" y="2" width="4" height="4"/><use href="#dot" x="8" y="14" width="4" height="4"/><use href="#dot" x="2" y="8" width="4" height="4"/><use href="#dot" x="14" y="8" width="4" height="4"/></svg></button>
<button class="btn p-0 sm on" title="现有点"><svg class="ic" viewBox="0 0 20 20"><path d="M10.500 4v13M4 10.500h13" stroke="#111" stroke-width="1.300"/><circle cx="10.500" cy="10.500" r="1" fill="#d22" stroke="#d22"/></svg></button>
<button class="btn p-0 sm on" title="曲线上的点"><svg class="ic" viewBox="0 0 20 20"><path d="m4 17 13-13" stroke="#222" stroke-width="1.200"/><use href="#dot" x="5" y="11" width="5" height="5"/></svg></button>
<button class="btn p-0 border-0 sm" title="面上的点"><svg class="ic" viewBox="0 0 20 20"><path d="M3 7q5-6 14-4-2 6 0 11-3-3-6 3-5-1-8-3z" fill="url(#b)" stroke="#7391cc"/><use href="#dot" x="9" y="3" width="4" height="4"/></svg></button>
<span class="div"></span>
<button class="btn p-0 border-0 sm" title="网格点"><svg class="ic" viewBox="0 0 20 20"><path d="m5 3 10 3v12L5 14zM8.500 4v12M12 5v12M5 6.500l10 3M5 10l10 4" stroke="#333"/><circle cx="11" cy="9" r="1" fill="#d33" stroke="#d33"/></svg></button>
</div>

<main class="stage flex-fill overflow-hidden" style="min-height:0">
<svg class="d-block w-100 h-100" viewBox="0 148 962 658" role="img" aria-label="装配模型">
<defs>
<linearGradient id="cyl"><stop stop-color="#c97800"/><stop offset=".45" stop-color="#d98300"/><stop offset="1" stop-color="#de8700"/></linearGradient>
<linearGradient id="boss"><stop stop-color="#ca7900"/><stop offset=".28" stop-color="#a86400"/><stop offset=".55" stop-color="#c87700"/><stop offset="1" stop-color="#e08900"/></linearGradient>
<linearGradient id="hole"><stop stop-color="#a86400"/><stop offset="1" stop-color="#d98200"/></linearGradient>
<linearGradient id="bore" x1="0" y1="1" x2="1" y2="0"><stop stop-color="#ffb900"/><stop offset=".5" stop-color="#fba000"/><stop offset="1" stop-color="#b86c00"/></linearGradient>
<linearGradient id="dome" x1="0" y1="1" x2="1" y2="0"><stop stop-color="#d87e00"/><stop offset=".35" stop-color="#fa8f00"/><stop offset=".7" stop-color="#ffb900"/></linearGradient>
<clipPath id="eye"><ellipse cx="453.500" cy="504.500" rx="37" ry="37.500"/></clipPath>
<g id="tab">
<path d="m374 648 16.500 17v17L373.500 666z" fill="#b46c00"/>
<path d="m398 656 28-4v19l-21 3z" fill="#c87800"/><path d="m426 652 8 8v17l-8-6z" fill="#b46c00"/>
<path d="M390.500 665q8 2 14.500-3v20q-3 4-9 3-4 0-5.500-3zM434 660q8 2 14.500-2v18q-3 4-8 3.500-5 0-6.500-2.500z" fill="url(#cyl)"/>
<path d="m374 648 58-7.500 16 16q2 4-6 4.500-6 0-8-1l-8-8-28 4 7 5q2 5-7 5-5 0-7.500-1z" fill="#ffbf00"/>
</g>
</defs>
<g class="model">
<path d="M527 384 545 382 577 413 575 622 526 600z" fill="#b46c00"/>
<path d="M577 413 630 406 628 634 585 640 568 622 575 622z" fill="#cc7a00"/>
<path d="M630 406C658 402 676 392 675.500 382L673.500 611C674 620 656 631 628 634z" fill="url(#cyl)"/>
<path d="M545 382 640 361C662 365 676 374 675.500 382 676 392 658 402 630 406L577 413z" fill="#ffbf00"/>
<path d="M566.500 376v8c4 16 73 17 77 0V305l-25 14z" fill="url(#boss)"/>
<path d="m376 321 196-25 66 9q4 10-19 14.500L402.500 347z" fill="#ffbf00"/>
<path d="m376 321 26.500 26v52.500L375.500 374z" fill="#b46c00"/>
<path d="m402.500 347 216.500-27.500-.5 53-216 27z" fill="#cc7a00"/>
<ellipse cx="437" cy="328" rx="18" ry="6.500" fill="url(#hole)"/>
<path d="M572.500 300v4c8 18 68 20 71 2 1-5-4-8-8-10z" fill="#ffbf00"/>
<path d="M572.500 300v5c5 14 60 15 66 0v-4z" fill="#d68200"/>
<path d="M572.500 299c5 14 60 15 66 0l-4-5h-58z" fill="#ffbf00"/>
<path d="m575.500 279 11 11v20q-9-2-11-7z" fill="#b46c00"/><path d="m586.500 290 30 2v20q-19 2-30-3z" fill="#c87800"/><path d="m616.500 292 20-9v19q-5 8-20 10z" fill="#cc7a00"/>
<path d="m575.500 279 19-8.500 31 2 11 10.500v2l-20 7-30-2-11-10z" fill="#ffbf00"/><path d="m577 279 11 8.500 28 2 19-7" fill="none" stroke-width=".8"/>

<path d="M377 376 402.500 399.500 401.500 468.500 377 446z" fill="#b46c00"/>
<path d="M320 520 368 514.500 403 547 354.500 553z" fill="#ffbf00"/>
<path d="m503 497.500 14-2 34.500 32-46 7-3-4z" fill="#ffbf00"/>
<path d="M503.500 503c11-1 11 6 0 5z" fill="#b66d00"/>
<path d="M368.500 461q2-8 8.500-15l25 23 60-28 28 21-41 8-46 24z" fill="url(#dome)"/>
<path d="m368.500 461 34.500 33.500V547l-34.500-33z" fill="#b46c00"/>
<path d="m368 514 35 33-4 1-35-32z" fill="#ed9700"/>
<path d="m401.500 468.500 34.500-24 1-15 4-4 21 17 24 12-2 8-28-8-36 14z" fill="#ffbf00" stroke="none"/>
<path d="m402.500 399.500 94-11.500-.5 66q-1 5-5 3L461.500 441v-13q-1-5-5-5l-14 2q-4 1-4.500 6l-1 13-35 24z" fill="#cc7a00"/>
<path d="m440 425 16-2q5 0 5.500 5v15z" fill="#b46c00"/>
<path d="m402 468 34-25v3.500zM461 440l34.500 15q-1 4-5 3L459 443z" fill="#6f4500"/>
<path d="M403 494C409 467 436 451 458 451.500 483 451 500 467 503.500 483V531l2.500 3 45.500-6.500-.5 35.500L354 588.500 354.500 553 401 547l2-5z" fill="#cc7a00"/>
<path d="m320 520 34.500 33-.5 35.500-34-32z" fill="#b46c00"/>
<ellipse cx="453.500" cy="504.500" rx="38.500" ry="38.500" fill="#e09000"/>
<g clip-path="url(#eye)">
<path d="M414 465h80v80h-80z" fill="url(#bore)"/>
<path d="M410 460h46q0 20-7 31-12 18-34 18z" fill="#d6d7d9"/>
<path d="M468 466q5 20-10 39-14 17-42 18" fill="none" stroke="#d98400" stroke-width="4"/>
<path d="M465 466q4 20-10 37-14 17-40 17m56-54q5 20-10 41-14 18-44 19" fill="none" stroke="#5b3800" stroke-width=".9"/>
<path d="M456 466q0 14-7 25-12 17-34 18M478 472q6 22-8 42-12 14-36 16" fill="none" stroke-width=".9"/>
<path d="M422 530q17 16 38 10 14-3 22-15" fill="none" stroke="#f8d418" stroke-width="2.500"/>
</g>
<ellipse cx="453.500" cy="504.500" rx="36.500" ry="37" fill="none" stroke-width=".8"/>
<g fill="url(#hole)"><ellipse cx="434" cy="527.500" rx="8" ry="2.800"/><ellipse cx="349.500" cy="525" rx="10.500" ry="4"/><ellipse cx="368" cy="542.500" rx="8" ry="3.200"/><ellipse cx="521.500" cy="523" rx="10.500" ry="4"/></g>
<path d="m297.500 551 22.500-3v8.500l34 32L551 563v-9l17.500 15.500L347.500 598z" fill="#ffbf00"/>
<ellipse cx="334" cy="573" rx="3" ry="1.800" fill="#a86500"/>
<path d="m297.500 551 50 47v53l-50-47zM297.500 604l50 47-.5 19-49.500-47z" fill="#b46c00"/>
<path d="m347.500 651 26.500-3v19l-27 3zM432 640.500l79-10.500v20.500L448 658z" fill="#cc7a00"/>
<path d="m347.500 598 221-28.500V623l-221 28z" fill="#cc7a00"/>
<path d="m568.500 616 7 6-7 1z" fill="#ffbf00"/>
<use href="#tab"/><use href="#tab" x="137" y="-17.500"/>
</g>
<g stroke="none"><path d="m463 577 3 20-1 14-2 17-2-17-1-14z" fill="#4763d0"/><path d="m462 580-1 16 1 14z" fill="#8c9bd9"/><path d="m443 610 8 3 11 14-14-8z" fill="#78b983"/><path d="m444 611 7 6 9 9z" fill="#bce2bd"/><path d="m467 628 34-7 14 2-14 3z" fill="#e48a81"/><path d="m480 625 21-4v3z" fill="#f4b8ae"/></g>
<g class="axis"><text x="444" y="575" fill="#2442d8">ZC</text><text x="444" y="607" fill="#2b9a35">YC</text><text x="501" y="617" fill="#d33a32">XC</text></g>
<g fill="#d2d3d5" stroke="#aaacae"><path d="m46 722 19-4 9 7v23l-8-3-20 3z"/><path d="m46 722 8 6 20-3m-20 3v22M65 718v27" fill="none"/></g>
<path d="M52.500 746v-26" stroke="#1238b8" stroke-width="3"/><path d="m52.500 714 4 10h-8z" fill="#1742d2"/><path d="m51 745-9-7" stroke="#238b2c" stroke-width="2"/><path d="m39 735 6 1-3 5z" fill="#238b2c"/><path d="m55 748 26-2" stroke="#c52828" stroke-width="2"/><path d="m78 742 10 3-9 3z" fill="#d33"/><circle cx="52" cy="748" r="4.500" fill="#b6b6b6"/><circle cx="51" cy="747" r="2" fill="#e4e4e4"/>
<g class="axis"><text x="49" y="714" fill="#2350d8">Z</text><text x="34" y="739" fill="#2b9a35">Y</text><text x="88" y="749" fill="#d33a32">X</text></g>
</svg>
</main>

<div class="foot overflow-hidden flex-shrink-0 bg-white">
<div class="bars d-flex" role="toolbar" aria-label="草图">
<div class="bar low-cut d-flex align-items-center flex-shrink-0">
<button class="btn p-0 border-0 tb" title="约束"><svg class="ic" viewBox="0 0 24 24"><path d="M18 1v9M12 10.500h11M12 22l5-7m1 7 5-7" stroke="#80286e" stroke-width="1.300"/><circle cx="7" cy="15" r="2" fill="#d33" stroke="#d33"/></svg></button>
<span class="div"></span>
<button class="btn p-0 border-0 tb" title="装配约束"><svg class="ic" viewBox="0 0 24 24"><path d="m2 21 9-8m-3-1q4-2 6 1t-1 5" stroke="#a88321" stroke-width="4"/><path d="m2 21 9-8m-3-1q4-2 6 1t-1 5" stroke="#f2d461" stroke-width="2"/><path d="M10.500 1.500h7v6h-7zM16.500 7.500h6v6h-6zM10.500 7.500h6v6h-6z" fill="#f5e37a" stroke="#7a6b28"/></svg></button>
<button class="btn p-0 border-0 tb" title="组件阵列"><svg class="ic" viewBox="0 0 24 24"><use href="#box" x="0" y="0" width="12" height="11"/><use href="#box" x="0" y="12" width="12" height="11"/><use href="#box" x="12" y="13" width="12" height="10"/></svg></button>
<button class="btn p-0 border-0 tb" title="移动组件"><svg class="ic" viewBox="0 0 24 24"><path d="M12.500 1.500h7v6h-7zM8.500 7.500h7v7h-7z" fill="#fff" stroke="#222"/><path d="M4.500 14.500h7v7h-7z" fill="#f9ea74" stroke="#d33" stroke-width="1.400"/></svg></button>
<span class="div"></span>
<button class="btn p-0 border-0 tb" title="组件属性"><svg class="ic" viewBox="0 0 24 24"><path d="m2 6 9-5 12 4v13l-8 5H2z" fill="#bbb" stroke="#777"/><path d="m2 6 9-5 12 4-8 5z" fill="#eee" stroke="#777"/><path d="m15 10 8-5v13l-8 5z" fill="#888" stroke="none"/><path d="m1 15 4-3 10-1v7L4 22z" fill="#fbd29b" stroke="#cb8331"/><path d="m7 15 6-1m-6 4 6-1" stroke="#b8742b"/></svg></button>
<span class="div"></span>
<button class="btn p-0 border-0 tb" title="链接"><svg class="ic" viewBox="0 0 24 24"><use href="#link" x="4" y="0" width="16" height="24"/></svg></button>
<button class="btn p-0 border-0 tb" title="替换"><svg class="ic" viewBox="0 0 24 24"><path d="M3 12V5h4M1 9l2 4 2-4" stroke="#333"/><path d="M7.500 2.500h15v4h-15z" fill="#ddd" stroke="#555"/><use href="#link" x="11" y="8" width="12" height="16"/></svg></button>
<button class="btn p-0 border-0 tb" title="关系浏览"><svg class="ic" viewBox="0 0 24 24"><path d="M15.500 1.500h8v3h-8zM15.500 7.500h8v3h-8zM.5 10.500h8v3h-8zM8 12l7-9M8 12l7-3M8 12l7 6" fill="#c9dbf5" stroke="#4268ad"/><path d="M13.500 13.500h10v10h-10z" fill="#fff" stroke="#33a"/><path d="M17 17.500h2v4h-2m0 0h4M18 15h1" stroke="#229" stroke-width="1.500"/></svg></button>
<button class="btn p-0 border-0 chev ms-3" title="展开"><svg class="ic" viewBox="0 0 24 24"><path d="m9 0 3 3-3 3m4-6 3 3-3 3" stroke="#111" stroke-width="1.300"/><path d="M10 17h6l-3 3z" fill="#111" stroke="none"/></svg></button>
</div>
<div class="bar d-flex align-items-center flex-fill">
<span class="grip"></span>
<button class="btn p-0 border-0 tb" title="草图"><svg class="ic" viewBox="0 0 24 24"><path d="m2 1 17 3v18L2 19z" fill="#f2f6ee" stroke="#384b38" stroke-width="1.400"/><path d="m4 4 6 1v6l-6-1zM4 13l4 1v4l-4-1zM11 11h5v7h-5z" stroke="#384b38"/><path d="m17 0 1 4 5-1-3 4 3 3-5-1-2 4-1-5-4-1 4-2z" fill="#ffec46" stroke="#8cb"/></svg></button>
<button class="btn p-0 border-0 done d-flex align-items-center" disabled title="完成草图"><svg class="ic ms-1 me-1" viewBox="0 0 24 24"><path d="M.5.500h23v23H.5z" fill="#e5e5e5" stroke="#bbb"/><path d="M2 3q5 3 9 0t10 0v12q-5-3-8 0l-7-1z" fill="#fff" stroke="#888"/><path d="M3 4h4v3H3zm8-1h4v3h-4zm-4 4h4v3H7zm8-1h4v4h-4zm-4 5h4v3h-4zm-7 0h3v3H4z" fill="#777" stroke="none"/><path d="m2 3 5 19" stroke="#888" stroke-width="2"/></svg><span>完成草图</span></button>
<button class="btn p-0 border-0 tb" title="轮廓"><svg class="ic" viewBox="0 0 24 24"><path d="M2.500 1v14q0 4 4 4t5-4v-5q0-4 4-4t5 4v10" stroke-width="1.300"/><use href="#dot" x="0" y="10" width="5" height="5"/><use href="#dot" x="9" y="10" width="5" height="5"/><use href="#dot" x="18" y="10" width="5" height="5"/></svg></button>
<button class="btn p-0 border-0 tb" title="直线"><svg class="ic" viewBox="0 0 24 24"><path d="M4 20 20 4" stroke-width="1.300"/><use href="#dot" x="1" y="18" width="5" height="5"/><use href="#dot" x="18" y="1" width="5" height="5"/></svg></button>
<button class="btn p-0 border-0 tb" title="圆弧"><svg class="ic" viewBox="0 0 24 24"><path d="M3 3q16 1 18 17" stroke-width="1.300"/><use href="#dot" x="0" y="1" width="5" height="5"/><use href="#dot" x="13" y="5" width="5" height="5"/><use href="#dot" x="18" y="18" width="5" height="5"/></svg></button>
<button class="btn p-0 border-0 tb" title="圆"><svg class="ic" viewBox="0 0 24 24"><circle cx="12" cy="12" r="10" stroke="#333" stroke-width="1.300"/></svg></button>
<button class="btn p-0 border-0 tb" title="圆角"><svg class="ic" viewBox="0 0 24 24"><path d="M2 2.500h8q11 0 11 11V22" stroke="#999"/><path d="M11 2.500h10V13" stroke="#bbb" stroke-dasharray="1 1.500"/></svg></button>
<button class="btn p-0 border-0 tb" title="倒角"><svg class="ic" viewBox="0 0 24 24"><path d="M0 2.500h11l10 10V22" stroke="#999"/><path d="M11 2.500h10V13" stroke="#bbb" stroke-dasharray="1 1.500"/></svg></button>
<button class="btn p-0 border-0 tb" title="矩形"><svg class="ic" viewBox="0 0 24 24"><path d="M2.500 4.500h19v14h-19z" stroke="#333" stroke-width="1.300"/><use href="#dot" x="0" y="2" width="5" height="5"/><use href="#dot" x="19" y="16" width="5" height="5"/></svg></button>
<button class="btn p-0 border-0 tb" title="样条"><svg class="ic" viewBox="0 0 24 24"><path d="m2 11 5-9 8 16 7-8" stroke="#aaa"/><path d="m2 11 5-2 8 5 7-4" stroke="#555"/><g fill="#999" stroke="#777"><circle cx="2" cy="11" r="1.500"/><circle cx="7" cy="2.500" r="1.500"/><circle cx="15" cy="18" r="1.500"/><circle cx="21.500" cy="9" r="1.500"/></g><use href="#dot" x="5" y="7" width="5" height="5"/><use href="#dot" x="12" y="11" width="5" height="5"/></svg></button>
<button class="btn p-0 border-0 tb" title="点"><svg class="ic" viewBox="0 0 24 24"><path d="M12.500 3v18M4 11.500h17" stroke="#222" stroke-width="1.500"/></svg></button>
<button class="btn p-0 border-0 tb" title="偏置曲线"><svg class="ic" viewBox="0 0 24 24"><path d="M3 21.500V8q2-5 7-5h5l7 8v5l-5 5.500zM7 17.500v-8q2-3 5-3h2l4 5v2q-2 3-6 4z" stroke="#999" stroke-width="1.200"/></svg></button><button class="btn p-0 border-0 car" title="更多"></button>
<span class="div"></span>
<button class="btn p-0 border-0 tb" title="快速修剪"><svg class="ic" viewBox="0 0 24 24"><path d="m4 1 10 21M2 14.500h10" stroke="#999"/><path d="M13 14.500h9" stroke="#aaa" stroke-dasharray="1 1"/><path d="m13 11 7-6 2 3-6 6z" fill="#ddd" stroke="#bbb"/></svg></button>
<button class="btn p-0 border-0 tb" title="快速延伸"><svg class="ic" viewBox="0 0 24 24"><path d="m4 1 10 21M2 14.500h10" stroke="#999"/><path d="m13 13 7-10 3 2-7 9-4 1z" fill="#eee" stroke="#999"/></svg></button>
<button class="btn p-0 border-0 tb" title="制作拐角"><svg class="ic" viewBox="0 0 24 24"><path d="M2 10.500h12V22M9 4l10 11" stroke="#999"/><path d="M14 10.500h9M14.500 1v9" stroke="#aaa" stroke-dasharray="1 1.500"/></svg></button>
<span class="div"></span>
<button class="btn p-0 border-0 tb" title="快速尺寸"><svg class="ic" viewBox="0 0 24 24"><path d="M1.500 8v9m21-9v9M2 12.500h20M2 12.500l4-2v4zm20 0-4-2v4z" fill="#aaa" stroke="#aaa"/><path d="M13 2h6l-3 6h4L10 18l2-7H8z" fill="#eee" stroke="#aaa"/></svg></button><button class="btn p-0 border-0 car" title="更多"></button>
<span class="div"></span>
<button class="btn p-0 border-0 tb" title="几何约束"><svg class="ic" viewBox="0 0 24 24"><path d="m1 18 8-11m-3 11 8-11M18 13v9m-5 0h10" stroke="#999" stroke-width="1.200"/></svg></button>
<button class="btn p-0 border-0 tb" title="设为对称"><svg class="ic" viewBox="0 0 24 24"><path d="M5 1.500H2.500v19H10M19 1.500h2.500v19H14M8.500 1v7m7-7v7M3 4.500h5m8 0h5" stroke="#aaa" stroke-width="1.400"/><path d="M12 2v21" stroke="#888" stroke-dasharray="4 2"/></svg></button>
<button class="btn p-0 border-0 tb" title="显示约束"><svg class="ic" viewBox="0 0 24 24"><path d="m2 7 6 5-6 5z" fill="#bbb" stroke="#bbb"/><path d="m10 12 8-6" stroke="#aaa"/></svg></button>
</div>
</div>
</div>
</body>
</html>
